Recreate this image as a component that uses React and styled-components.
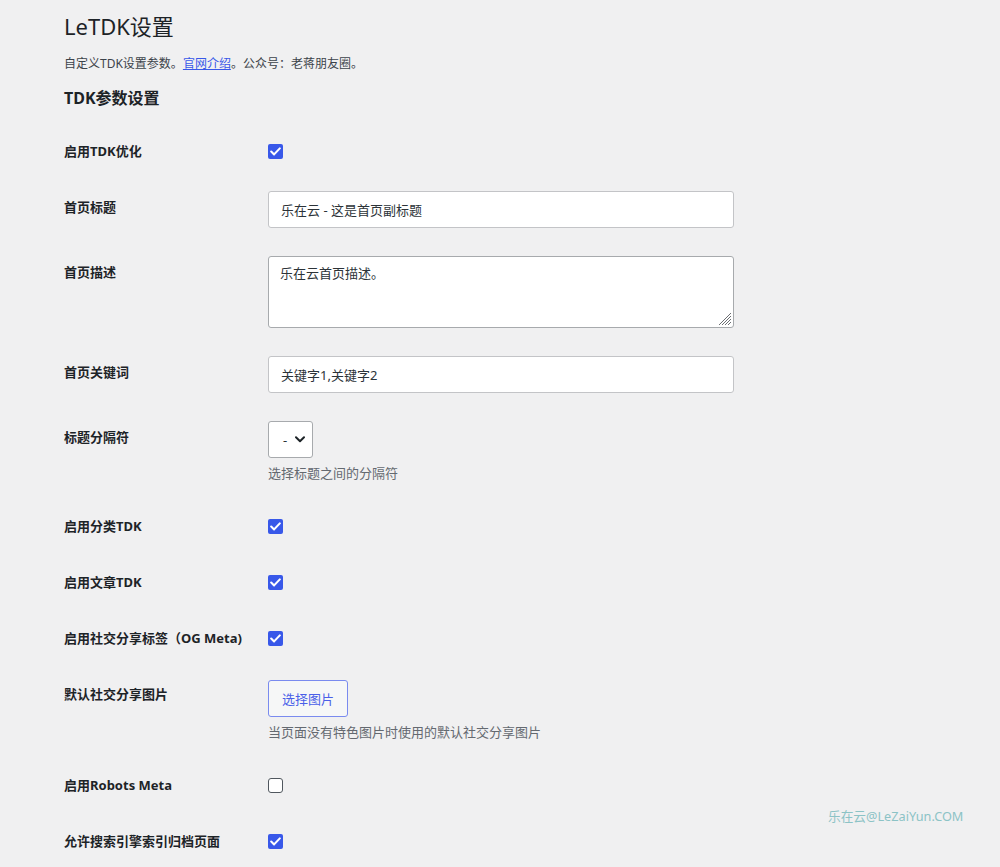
import styled, { createGlobalStyle } from "styled-components";

const GlobalStyle = createGlobalStyle`
  html, body {
    margin: 0;
    min-height: 100%;
    background: #f0f0f1;
  }
  body {
    font-family: "Noto Sans", "Noto Sans CJK SC", sans-serif;
    color: #1d2327;
  }
`;

const Wrap = styled.div`
  position: relative;
  min-height: 867px;
  padding: 11px 0 0 64px;
  box-sizing: border-box;
`;

const Title = styled.h1`
  margin: 0;
  font-size: 22px;
  font-weight: 400;
  line-height: 30px;
  color: #1d2327;
`;

const Intro = styled.p`
  margin: 14px 0 0;
  font-size: 12px;
  line-height: 18px;
  color: #3c434a;

  a {
    color: #3858e9;
    text-decoration: underline;
  }
`;

const SectionTitle = styled.h2`
  margin: 14px 0 0;
  font-size: 16px;
  font-weight: 700;
  line-height: 22px;
`;

const Form = styled.div`
  margin-top: 13px;
  width: 680px;
`;

const Row = styled.div`
  display: grid;
  grid-template-columns: 204px 1fr;
  align-items: start;
`;

const Label = styled.div`
  padding: 20px 0 18px;
  font-size: 13px;
  font-weight: 700;
  line-height: 18px;
`;

const Field = styled.div`
  padding: 13px 0 15px;
  display: flex;
  flex-direction: column;
  align-items: flex-start;
`;

const Box = styled.span`
  display: inline-flex;
  align-items: center;
  justify-content: center;
  width: 15px;
  height: 15px;
  margin-top: 9px;
  box-sizing: border-box;
  border-radius: ${(p) => (p.$on ? "2px" : "3px")};
  background: ${(p) => (p.$on ? "#3858e9" : "#fff")};
  border: ${(p) => (p.$on ? "none" : "1px solid #50575e")};
`;

const TextInput = styled.div`
  width: 466px;
  height: 37px;
  box-sizing: border-box;
  padding: 0 12px;
  display: flex;
  align-items: center;
  background: #fff;
  border: 1px solid #c3c4c7;
  border-radius: 3px;
  font-size: 13px;
  color: #2c3338;
`;

const AreaWrap = styled.div`
  position: relative;
  width: 466px;
  height: 72px;
`;

const TextArea = styled.textarea`
  display: block;
  width: 100%;
  height: 100%;
  box-sizing: border-box;
  padding: 7px 11px;
  margin: 0;
  background: #fff;
  border: 1px solid #a7aaad;
  border-radius: 3px;
  font-family: inherit;
  font-size: 13px;
  line-height: 18px;
  color: #2c3338;
  outline: none;
  resize: none;
`;

const Grip = styled.svg`
  position: absolute;
  right: 2px;
  bottom: 2px;
`;

const Select = styled.div`
  width: 45px;
  height: 37px;
  box-sizing: border-box;
  padding: 0 0 0 14px;
  display: flex;
  align-items: center;
  gap: 8px;
  background: #fff;
  border: 1px solid #a7aaad;
  border-radius: 3px;
  font-size: 13px;
  color: #2c3338;
`;

const Hint = styled.div`
  margin-top: 6px;
  font-size: 13px;
  line-height: 18px;
  color: #646970;
`;

const Button = styled.button`
  margin-top: 2px;
  height: 37px;
  padding: 0 13px;
  background: #f6f7f7;
  border: 1px solid #7a8bef;
  border-radius: 3px;
  font-family: inherit;
  font-size: 13px;
  color: #4a5fe8;
  cursor: pointer;
`;

const Watermark = styled.div`
  position: absolute;
  left: 828px;
  top: 807px;
  font-size: 12.7px;
  line-height: 18px;
  color: #8cc3c6;
`;

const Check = ({ on }) => (
  <Box $on={on}>
    {on && (
      <svg width="11" height="9" viewBox="0 0 11 9">
        <path d="M1.2 4.6 L4.1 7.4 L9.8 1.4" fill="none" stroke="#fff" strokeWidth="2.1" strokeLinecap="round" strokeLinejoin="round" />
      </svg>
    )}
  </Box>
);

const Chevron = () => (
  <svg width="10" height="7" viewBox="0 0 10 7">
    <path d="M1 1.3 L5 5.2 L9 1.3" fill="none" stroke="#1d2327" strokeWidth="2" strokeLinecap="round" strokeLinejoin="round" />
  </svg>
);

const CheckRow = ({ label, on }) => (
  <Row>
    <Label>{label}</Label>
    <Field>
      <Check on={on} />
    </Field>
  </Row>
);

function App() {
  return (
    <Wrap>
      <GlobalStyle />
      <Title>LeTDK设置</Title>
      <Intro>
        自定义TDK设置参数。<a href="#">官网介绍</a>。公众号：老蒋朋友圈。
      </Intro>
      <SectionTitle>TDK参数设置</SectionTitle>
      <Form>
        <CheckRow label="启用TDK优化" on />
        <Row>
          <Label>首页标题</Label>
          <Field>
            <TextInput>乐在云 - 这是首页副标题</TextInput>
          </Field>
        </Row>
        <Row>
          <Label>首页描述</Label>
          <Field>
            <AreaWrap>
              <TextArea defaultValue="乐在云首页描述。" />
              <Grip width="15" height="15" viewBox="0 0 15 15">
                <path d="M14 2 L2 14 M14 5 L5 14 M14 8 L8 14 M14 11 L11 14" stroke="#6b6e72" strokeWidth="1" />
              </Grip>
            </AreaWrap>
          </Field>
        </Row>
        <Row>
          <Label>首页关键词</Label>
          <Field>
            <TextInput>关键字1,关键字2</TextInput>
          </Field>
        </Row>
        <Row>
          <Label>标题分隔符</Label>
          <Field>
            <Select>
              <span>-</span>
              <Chevron />
            </Select>
            <Hint>选择标题之间的分隔符</Hint>
          </Field>
        </Row>
        <CheckRow label="启用分类TDK" on />
        <CheckRow label="启用文章TDK" on />
        <CheckRow label="启用社交分享标签（OG Meta)" on />
        <Row>
          <Label>默认社交分享图片</Label>
          <Field>
            <Button>选择图片</Button>
            <Hint>当页面没有特色图片时使用的默认社交分享图片</Hint>
          </Field>
        </Row>
        <CheckRow label="启用Robots Meta" on={false} />
        <CheckRow label="允许搜索引擎索引归档页面" on />
      </Form>
      <Watermark>乐在云@LeZaiYun.COM</Watermark>
    </Wrap>
  );
}

export default App;
